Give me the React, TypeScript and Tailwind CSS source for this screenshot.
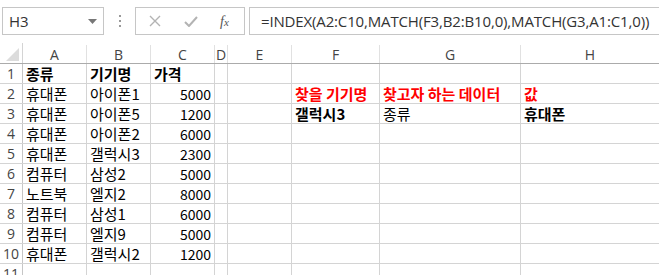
import React from "react";

const cols = ["A", "B", "C", "D", "E", "F", "G", "H"];
const colW = ["w-[64px]", "w-[64px]", "w-[64px]", "w-[13px]", "w-[64px]", "w-[88px]", "w-[141px]", "flex-1"];

type Cell = { t?: string; right?: boolean; bold?: boolean; red?: boolean };

const rows: Cell[][] = [
    [{ t: "종류", bold: true }, { t: "기기명", bold: true }, { t: "가격", bold: true }],
    [{ t: "휴대폰" }, { t: "아이폰1" }, { t: "5000", right: true }, {}, {}, { t: "찾을 기기명", bold: true, red: true }, { t: "찾고자 하는 데이터", bold: true, red: true }, { t: "값", bold: true, red: true }],
    [{ t: "휴대폰" }, { t: "아이폰5" }, { t: "1200", right: true }, {}, {}, { t: "갤럭시3", bold: true }, { t: "종류" }, { t: "휴대폰", bold: true }],
    [{ t: "휴대폰" }, { t: "아이폰2" }, { t: "6000", right: true }],
    [{ t: "휴대폰" }, { t: "갤럭시3" }, { t: "2300", right: true }],
    [{ t: "컴퓨터" }, { t: "삼성2" }, { t: "5000", right: true }],
    [{ t: "노트북" }, { t: "엘지2" }, { t: "8000", right: true }],
    [{ t: "컴퓨터" }, { t: "삼성1" }, { t: "6000", right: true }],
    [{ t: "컴퓨터" }, { t: "엘지9" }, { t: "5000", right: true }],
    [{ t: "휴대폰" }, { t: "갤럭시2" }, { t: "1200", right: true }],
    [],
];

export default function App() {
    return (
        <div className="w-[659px] h-[275px] overflow-hidden bg-white text-black" style={{ fontFamily: '"Noto Sans CJK KR", sans-serif' }}>
            {/* formula bar */}
            <div className="flex items-start h-[43px] pt-[7px] pl-[2px]">
                <div className="w-[102px] h-[28px] border border-[#c6c6c6] flex items-center justify-between pl-[6px] pr-[6px]">
                    <span className="text-[15px] text-[#333]" style={{ fontFamily: '"Open Sans", sans-serif' }}>H3</span>
                    <svg width="9" height="5" viewBox="0 0 9 5"><path d="M0 0h9L4.5 5z" fill="#777" /></svg>
                </div>
                <div className="w-[31px] h-[28px] flex flex-col items-center justify-center gap-[3px]">
                    <span className="w-[2px] h-[2px] bg-[#999]" />
                    <span className="w-[2px] h-[2px] bg-[#999]" />
                    <span className="w-[2px] h-[2px] bg-[#999]" />
                </div>
                <div className="w-[110px] h-[28px] border border-[#c6c6c6] flex items-center">
                    <svg className="ml-[13px]" width="12" height="12" viewBox="0 0 12 12"><path d="M1 1l10 10M11 1L1 11" stroke="#b3b3b3" strokeWidth="1.4" /></svg>
                    <svg className="ml-[23px]" width="14" height="11" viewBox="0 0 14 11"><path d="M1 6l4 4 8-9" stroke="#b3b3b3" strokeWidth="2" fill="none" /></svg>
                    <span className="ml-[22px] text-[14px] italic text-[#555]" style={{ fontFamily: '"Liberation Serif", serif' }}>f<span className="text-[11px]">x</span></span>
                </div>
                <div className="ml-[4px] flex-1 h-[28px] border border-r-0 border-[#c6c6c6] flex items-center pl-[11px]">
                    <span className="text-[15px] text-[#333] tracking-[-0.15px]" style={{ fontFamily: '"Open Sans", sans-serif' }}>=INDEX(A2:C10,MATCH(F3,B2:B10,0),MATCH(G3,A1:C1,0))</span>
                </div>
            </div>

            {/* column headers */}
            <div className="flex h-[21px] border-b border-[#ababab]">
                <div className="w-[23px] border-r border-[#d4d4d4] relative">
                    <svg className="absolute left-[6px] top-[5px]" width="13" height="13" viewBox="0 0 13 13"><path d="M13 0v13H0z" fill="#dcdcdc" /></svg>
                </div>
                {cols.map((c, i) => (
                    <div key={c} className={`${colW[i]} ${i < 7 ? "border-r border-[#e1e1e1]" : ""} mt-[2px] flex items-center justify-center text-[14px] text-[#444]`} style={{ fontFamily: '"Open Sans", sans-serif' }}>
                        {c}
                    </div>
                ))}
            </div>

            {/* rows */}
            {rows.map((r, ri) => (
                <div key={ri} className="flex h-[20px] border-b border-[#d4d4d4]">
                    <div className="w-[23px] border-r border-[#c6c6c6] flex items-center justify-center text-[14px] text-[#444]" style={{ fontFamily: '"Open Sans", sans-serif' }}>
                        {ri + 1}
                    </div>
                    {cols.map((c, ci) => {
                        const cell = r[ci] || {};
                        return (
                            <div key={c} className={`${colW[ci]} ${ci < 7 ? "border-r border-[#d4d4d4]" : ""} flex items-center px-[3px] whitespace-nowrap leading-none ${cell.right ? "justify-end text-[14px]" : "text-[15px]"} ${cell.bold ? "font-bold" : ""} ${cell.red ? "text-[#ff0000]" : ""}`}>
                                {cell.t}
                            </div>
                        );
                    })}
                </div>
            ))}
        </div>
    );
}
